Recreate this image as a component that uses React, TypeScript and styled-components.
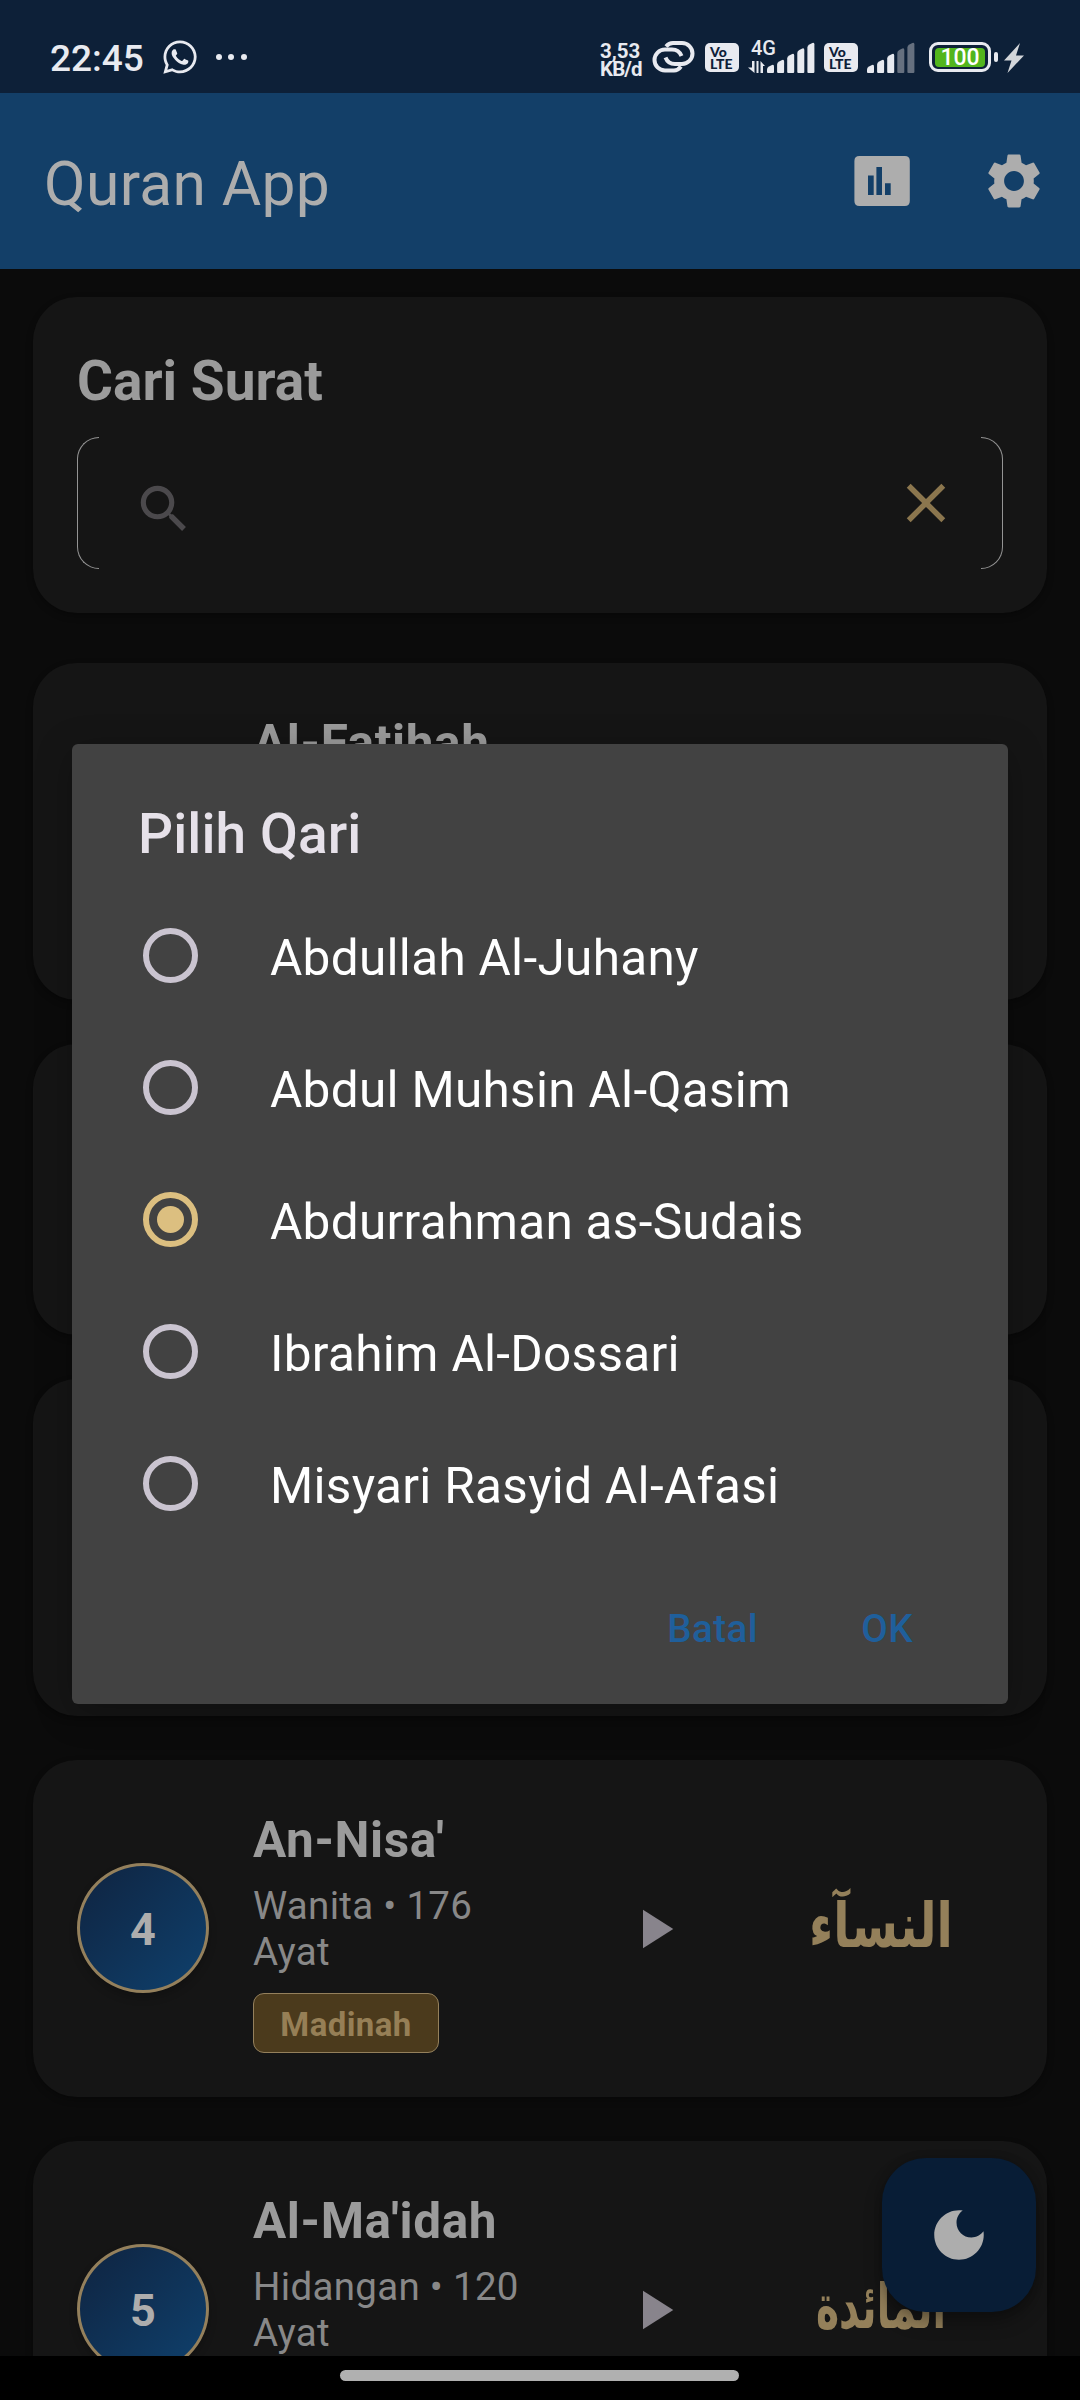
import React, { useState } from "react";
import styled, { createGlobalStyle } from "styled-components";
import { FaWhatsapp } from "react-icons/fa";
import { MdSettings } from "react-icons/md";

const GlobalStyle = createGlobalStyle`
  * { box-sizing: border-box; }
  body { margin: 0; background: #000; font-family: Roboto, "Noto Sans", sans-serif; }
  button { font: inherit; letter-spacing: inherit; border: 0; padding: 0; background: none; color: inherit; }
`;

const Screen = styled.div`
  position: relative;
  display: flex;
  flex-direction: column;
  width: 1080px;
  height: 2400px;
  overflow: hidden;
  background: #0b0b0b;
`;

/* Status bar */
const StatusBar = styled.header`
  display: flex;
  align-items: flex-start;
  justify-content: space-between;
  flex: none;
  height: 93px;
  padding: 40px 56px 0 50px;
  background: #0d2038;
  color: #e8eaf0;
`;
const StatusGroup = styled.div`
  display: flex;
  align-items: flex-start;
`;
const Clock = styled.span`
  width: 113px;
  font-size: 37px;
  font-weight: 500;
  line-height: 38px;
  white-space: nowrap;
`;
const WhatsAppIcon = styled(FaWhatsapp)`
  margin: -2px 0 0 -2px;
`;
const Dots = styled.div`
  display: flex;
  gap: 6.4px;
  padding: 14px 0 0 17px;
`;
const Dot = styled.i`
  width: 6px;
  height: 6px;
  border-radius: 50%;
  background: currentColor;
`;
const NetSpeed = styled.div`
  display: flex;
  flex-direction: column;
  width: 52px;
  padding-top: 2px;
  font-size: 20.5px;
  font-weight: 700;
  line-height: 18px;
  white-space: nowrap;

  span + span { letter-spacing: -0.9px; }
`;
const LinkIcon = styled.svg`
  width: 43px;
  height: 33px;
  margin-right: 1px;
`;
const VoLte = styled.div`
  display: flex;
  flex-direction: column;
  width: 34px;
  height: 29px;
  margin: 3px 9px 0;
  padding: 3px 0 0 5px;
  border-radius: 5px;
  background: #e8eaf0;
  color: #0d2038;
  font-family: Lato, sans-serif;
  font-size: 14px;
  font-weight: 900;
  line-height: 11.5px;
`;
const NetworkKind = styled.div`
  display: flex;
  flex-direction: column;
  width: 19px;
  height: 33px;
  font-size: 20px;
  font-weight: 500;
  line-height: 16px;
  white-space: nowrap;

  span { padding-left: 3px; }
  svg { margin-top: 5px; }
`;
const Bars = styled.svg`
  width: 48px;
  height: 33px;
`;
const Battery = styled.div`
  display: flex;
  align-items: center;
  width: 62px;
  height: 30px;
  margin: 2px 3px 0 14px;
  padding: 2.5px 3px;
  border: 3px solid #e8eaf0;
  border-radius: 9px;
`;
const Charge = styled.div`
  width: 50px;
  height: 19px;
  border-radius: 4px;
  background: #52b51c;
  color: #fff;
  font-size: 23px;
  font-weight: 500;
  line-height: 20.5px;
  text-align: center;
`;
const BatteryTip = styled.i`
  width: 4px;
  height: 10px;
  margin: 12px 6px 0 0;
  border-radius: 2px;
  background: #e8eaf0;
`;

/* App bar */
const AppBar = styled.div`
  display: flex;
  align-items: center;
  flex: none;
  height: 176px;
  padding: 0 33px 0 44px;
  background: #133f68;
  color: #adadad;
`;
const AppTitle = styled.h1`
  flex: 1;
  margin: 0;
  padding-top: 8px;
  font-size: 60.5px;
  font-weight: 400;
  line-height: 72px;
  letter-spacing: 0.35px;
`;
const BarAction = styled.button`
  display: flex;
  width: 66px;
  height: 66px;
  margin-left: 66px;
`;

/* Content */
const Content = styled.main`
  display: flex;
  flex-direction: column;
  flex: 1;
  min-height: 0;
  overflow: hidden;
  padding: 28px 33px 0;
`;
const Card = styled.section`
  flex: none;
  border-radius: 44px;
  background: #151515;
  box-shadow: 0 3px 7px rgba(0, 0, 0, 0.3);
`;
const SearchCard = styled(Card)`
  height: 316px;
  margin-bottom: 50px;
  padding: 44px;
`;
const SearchTitle = styled.h2`
  margin: 0 0 16px;
  font-size: 55px;
  font-weight: 700;
  line-height: 80px;
  color: #9b9b9b;
`;
const SearchField = styled.div`
  display: flex;
  align-items: center;
  height: 132px;
`;
const Bracket = styled.i<{ $side: "left" | "right" }>`
  width: 22px;
  height: 132px;
  border: 1px solid #949494;
  ${(p) =>
    p.$side === "left"
      ? "border-right: 0; border-radius: 22px 0 0 22px;"
      : "border-left: 0; border-radius: 0 22px 22px 0;"}
`;
const SearchIcon = styled.svg`
  width: 62px;
  height: 62px;
  margin: 12px auto 0 34px;
`;
const ClearIcon = styled.svg`
  width: 66px;
  height: 66px;
  margin-right: 22px;
`;

const SurahCard = styled(Card)<{ $height: number }>`
  display: flex;
  align-items: center;
  height: ${(p) => p.$height}px;
  margin-bottom: 44px;
  padding: 44px;
`;
const NumberBadge = styled.div`
  display: flex;
  align-items: center;
  justify-content: center;
  width: 132px;
  height: 130px;
  margin-bottom: 2px;
  padding-top: 3px;
  border: 3px solid #94805c;
  border-radius: 50%;
  background: linear-gradient(135deg, #0f2644 10%, #0f3e69 90%);
  background-origin: border-box;
  box-shadow: 0 5px 9px rgba(0, 0, 0, 0.2);
  color: #adadad;
  font-size: 45px;
  font-weight: 700;
`;
const SurahInfo = styled.div<{ $indent: number }>`
  display: flex;
  flex-direction: column;
  align-items: flex-start;
  align-self: flex-start;
  width: 285px;
  margin-left: ${(p) => p.$indent}px;
`;
const SurahName = styled.h3`
  margin: 0;
  font-size: 49.5px;
  font-weight: 700;
  line-height: 72px;
  letter-spacing: 0.6px;
  white-space: nowrap;
  color: #9b9b9b;
`;
const SurahMeaning = styled.p`
  margin: 7px 0 18px;
  font-size: 38.5px;
  line-height: 46px;
  letter-spacing: 0.3px;
  color: #888888;
`;
const PlaceChip = styled.span`
  width: 186px;
  height: 60px;
  border: 1px solid #94805c;
  border-radius: 11px;
  background: #4b3a1c;
  color: #967f56;
  font-size: 33px;
  font-weight: 700;
  line-height: 62px;
  letter-spacing: 0.4px;
  text-align: center;
`;
const PlayIcon = styled.svg`
  width: 66px;
  height: 66px;
  margin: 0 auto 0 83px;
`;
const ArabicName = styled.span<{ $fit: number }>`
  width: 244px;
  padding-bottom: 6px;
  color: #94805a;
  font-family: "DejaVu Sans", sans-serif;
  font-size: 62px;
  font-weight: 700;
  line-height: 80px;
  text-align: center;
  white-space: nowrap;
  transform: scaleX(${(p) => p.$fit});
`;

const Fab = styled.button`
  position: absolute;
  left: 882px;
  top: 2158px;
  display: flex;
  align-items: center;
  justify-content: center;
  width: 154px;
  height: 154px;
  border-radius: 44px;
  background: #081d36;
  box-shadow: 0 10px 18px rgba(0, 0, 0, 0.3), 0 0 8px rgba(0, 0, 0, 0.2);
`;

/* Dialog */
const Dialog = styled.div`
  position: absolute;
  left: 72px;
  top: 744px;
  display: flex;
  flex-direction: column;
  width: 936px;
  height: 960px;
  padding-top: 58px;
  border-radius: 6px;
  background: #424242;
  box-shadow: 0 8px 36px rgba(0, 0, 0, 0.25);
`;
const DialogTitle = styled.h2`
  margin: 0 66px 23px;
  font-size: 55px;
  font-weight: 500;
  line-height: 65px;
  letter-spacing: 0.1px;
  color: #e6e1e9;
`;
const Option = styled.label`
  display: flex;
  align-items: center;
  height: 132px;
  padding-left: 71px;
  color: #fff;
`;
const OptionText = styled.span`
  padding: 4px 0 0 72px;
  font-size: 49.5px;
  line-height: 60px;
  letter-spacing: 0.3px;
`;
const Radio = styled.i<{ $on: boolean }>`
  display: flex;
  align-items: center;
  justify-content: center;
  width: 55px;
  height: 55px;
  margin-bottom: 1px;
  border: 6px solid ${(p) => (p.$on ? "#dcbf80" : "#cac4d0")};
  border-radius: 50%;

  &::after {
    content: "";
    width: 27px;
    height: 27px;
    border-radius: 50%;
    background: ${(p) => (p.$on ? "#dcbf80" : "transparent")};
  }
`;
const Actions = styled.div`
  display: flex;
  align-items: center;
  justify-content: flex-end;
  gap: 103px;
  flex: 1;
  padding: 2px 95px 0 0;
  color: #1f5f9b;
  font-size: 38.5px;
  font-weight: 500;
  letter-spacing: 0.5px;
`;

const NavBar = styled.footer`
  display: flex;
  flex: none;
  height: 44px;
  padding: 14px 0 0 340px;
  background: #000;
`;
const NavPill = styled.i`
  width: 399px;
  height: 11px;
  border-radius: 6px;
  background: #b0b0b0;
`;

const TOPS = [22, 17, 11, 5.5, 0];

function Signal({ level }: { level: number }) {
  return (
    <Bars viewBox="0 0 48 33">
      {TOPS.map((t, i) => (
        <path
          key={i}
          d={`M${i * 10.1} 32V${t + 7.5 > 31 ? 30 : t + 7.5}Q${i * 10.1} ${t + 5.5} ${i * 10.1 + 2} ${t + 4.5}L${i * 10.1 + 5} ${t + 3}Q${i * 10.1 + 7} ${t + 2} ${i * 10.1 + 7} ${t + 4.5}V32Q${i * 10.1 + 7} 33 ${i * 10.1 + 6} 33H${i * 10.1 + 1}Q${i * 10.1} 33 ${i * 10.1} 32Z`}
          fill={i < level ? "#e8eaf0" : "#66707f"}
        />
      ))}
    </Bars>
  );
}

function VoLteBadge() {
  return (
    <VoLte>
      <span>Vo</span>
      <span>LTE</span>
    </VoLte>
  );
}

interface SurahProps {
  height: number;
  name?: string;
  number?: number;
  meaning?: string;
  place?: string;
  arabic?: string;
  arabicFit?: number;
}

function Surah({ height, name, number, meaning, place, arabic, arabicFit = 1 }: SurahProps) {
  return (
    <SurahCard $height={height}>
      {number ? <NumberBadge>{number}</NumberBadge> : null}
      {name && (
        <SurahInfo $indent={number ? 44 : 176}>
          <SurahName>{name}</SurahName>
          {meaning && <SurahMeaning>{meaning}</SurahMeaning>}
          {place && <PlaceChip>{place}</PlaceChip>}
        </SurahInfo>
      )}
      {arabic && (
        <>
          <PlayIcon viewBox="0 0 24 24">
            <path d="M8 5v14l11-7z" fill="#88848c" />
          </PlayIcon>
          <ArabicName lang="ar" dir="rtl" $fit={arabicFit}>{arabic}</ArabicName>
        </>
      )}
    </SurahCard>
  );
}

const QARIS = [
  "Abdullah Al-Juhany",
  "Abdul Muhsin Al-Qasim",
  "Abdurrahman as-Sudais",
  "Ibrahim Al-Dossari",
  "Misyari Rasyid Al-Afasi",
];

export default function App() {
  const [qari, setQari] = useState(2);
  return (
    <Screen>
      <GlobalStyle />
      <StatusBar>
        <StatusGroup>
          <Clock>22:45</Clock>
          <WhatsAppIcon size={38} />
          <Dots>
            <Dot />
            <Dot />
            <Dot />
          </Dots>
        </StatusGroup>
        <StatusGroup>
          <NetSpeed>
            <span>3,53</span>
            <span>KB/d</span>
          </NetSpeed>
          <LinkIcon viewBox="0 0 43 33" fill="none" stroke="#e8eaf0" strokeWidth="4">
            <path d="M14 6.5Q17 3 21 3H30A10.5 10.5 0 0 1 30 24H23Q16 24 13.5 17.5" />
            <path d="M29 26.500Q26 30.500 22 30.500H13A10.500 10.500 0 0 1 13 9.500H20Q27 9.500 29.500 16" />
          </LinkIcon>
          <VoLteBadge />
          <NetworkKind>
            <span>4G</span>
            <svg width="17" height="12" viewBox="0 0 17 12" fill="#e8eaf0">
              <path d="M4 0h2.500v12L0 6.500h4zM8.500 12V0h2v12zM12.500 12V0l4.500 5h-2v7z" />
            </svg>
          </NetworkKind>
          <Signal level={5} />
          <VoLteBadge />
          <Signal level={3} />
          <Battery>
            <Charge>100</Charge>
          </Battery>
          <BatteryTip />
          <svg width="20" height="33" viewBox="0 0 20 33" fill="#d3d6da">
            <path d="M16 3L0 20.500H7.500L3.500 33L20 15.500H12z" />
          </svg>
        </StatusGroup>
      </StatusBar>

      <AppBar>
        <AppTitle>Quran App</AppTitle>
        <BarAction aria-label="Statistik">
          <svg width="66" height="66" viewBox="0 0 66 66">
            <path
              fill="#adadad"
              fillRule="evenodd"
              d="M10.400 8H55.800Q60.800 8 60.800 13V53Q60.800 58 55.800 58H10.400Q5.400 58 5.400 53V13Q5.400 8 10.400 8ZM19 27.500V47H24.700V27.500ZM27.400 19V47H33V19ZM36 35.200V47H41.700V35.200Z"
            />
          </svg>
        </BarAction>
        <BarAction aria-label="Pengaturan">
          <MdSettings size={66} />
        </BarAction>
      </AppBar>

      <Content>
        <SearchCard>
          <SearchTitle>Cari Surat</SearchTitle>
          <SearchField>
            <Bracket $side="left" />
            <SearchIcon viewBox="0 0 24 24" fill="#4b494c">
              <path d="M15.500 14h-.79l-.28-.27A6.471 6.471 0 0 0 16 9.500 6.500 6.500 0 1 0 9.500 16c1.610 0 3.090-.59 4.230-1.570l.27.28v.79l5 4.990L20.490 19l-4.990-5zm-6 0C7.010 14 5 11.990 5 9.500S7.010 5 9.500 5 14 7.010 14 9.500 11.990 14 9.500 14z" />
            </SearchIcon>
            <ClearIcon viewBox="0 0 24 24" fill="#8b764e">
              <path d="M19 6.410 17.590 5 12 10.590 6.410 5 5 6.410 10.590 12 5 17.590 6.410 19 12 13.410 17.590 19 19 17.590 13.410 12z" />
            </ClearIcon>
            <Bracket $side="right" />
          </SearchField>
        </SearchCard>

        <Surah height={337} name="Al-Fatihah" />
        <Surah height={291} />
        <Surah height={337} />
        <Surah
          height={337}
          number={4}
          name="An-Nisa'"
          meaning="Wanita • 176 Ayat"
          place="Madinah"
          arabic="النسآء"
          arabicFit={0.765}
        />
        <Surah
          height={337}
          number={5}
          name="Al-Ma'idah"
          meaning="Hidangan • 120 Ayat"
          place="Madinah"
          arabic="المائدة"
          arabicFit={0.635}
        />
      </Content>

      <NavBar>
        <NavPill />
      </NavBar>

      <Fab aria-label="Mode gelap">
        <svg width="66" height="66" viewBox="0 0 24 24" fill="#adadad">
          <path d="M12 3c-4.970 0-9 4.030-9 9s4.030 9 9 9 9-4.030 9-9c0-.46-.04-.92-.1-1.360-.98 1.370-2.580 2.260-4.400 2.260-2.980 0-5.400-2.420-5.400-5.400 0-1.810.89-3.420 2.260-4.400-.44-.06-.9-.1-1.360-.1z" />
        </svg>
      </Fab>

      <Dialog role="dialog">
        <DialogTitle>Pilih Qari</DialogTitle>
        {QARIS.map((name, i) => (
          <Option key={name} onClick={() => setQari(i)}>
            <Radio $on={i === qari} />
            <OptionText>{name}</OptionText>
          </Option>
        ))}
        <Actions>
          <button>Batal</button>
          <button>OK</button>
        </Actions>
      </Dialog>
    </Screen>
  );
}
